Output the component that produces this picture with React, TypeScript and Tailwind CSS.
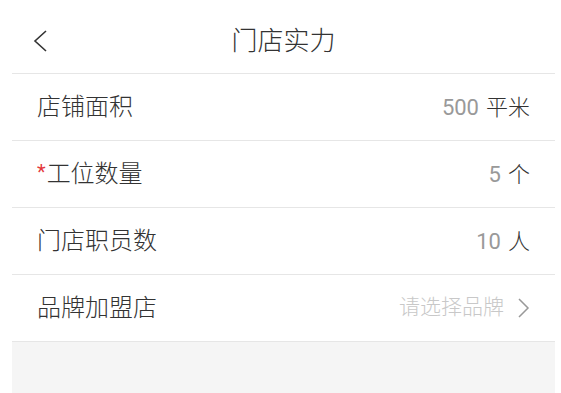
import React from "react";

const font = { fontFamily: 'Roboto, "Noto Sans CJK SC", sans-serif' };

function Row({ label, required, value, unit, placeholder }: { label: string; required?: boolean; value?: string; unit?: string; placeholder?: string }) {
  return (
    <div className="h-[67px] flex items-center justify-between pl-[25px] pr-[25px] border-b border-[#e6e6e6]">
      <div className="flex items-center text-[24px] text-[#333] font-light">
        {required && <span className="text-[#e4393c] text-[20px] leading-none mr-[1px] mt-[-4px] font-normal">*</span>}
        <span>{label}</span>
      </div>
      {placeholder ? (
        <div className="flex items-center">
          <span className="text-[21px] text-[#c8c8c8] font-light">{placeholder}</span>
          <svg width="14" height="22" viewBox="0 0 14 22" className="ml-[12px]">
            <polyline points="3,2 12,11 3,20" fill="none" stroke="#999" strokeWidth="1.5" />
          </svg>
        </div>
      ) : (
        <div className="flex items-center text-[22px]">
          <span className="text-[#999]">{value}</span>
          <span className="text-[#333] ml-[7px] font-light">{unit}</span>
        </div>
      )}
    </div>
  );
}

export default function App() {
  return (
    <div className="w-[561px] h-[393px] bg-white pl-[12px] pr-[6px] flex flex-col overflow-hidden" style={font}>
      <div className="h-[74px] shrink-0 flex items-center relative border-b border-[#e6e6e6]">
        <svg width="16" height="24" viewBox="0 0 16 24" className="ml-[20px] mt-[8px]">
          <polyline points="14,2 3,12 14,22" fill="none" stroke="#333" strokeWidth="1.6" />
        </svg>
        <div className="absolute left-0 right-0 top-0 bottom-0 flex items-center justify-center pt-[10px] text-[26px] text-[#333] font-light pointer-events-none">
          门店实力
        </div>
      </div>
      <Row label="店铺面积" value="500" unit="平米" />
      <Row label="工位数量" required value="5" unit="个" />
      <Row label="门店职员数" value="10" unit="人" />
      <Row label="品牌加盟店" placeholder="请选择品牌" />
      <div className="flex-1 bg-[#f5f5f5]" />
    </div>
  );
}
